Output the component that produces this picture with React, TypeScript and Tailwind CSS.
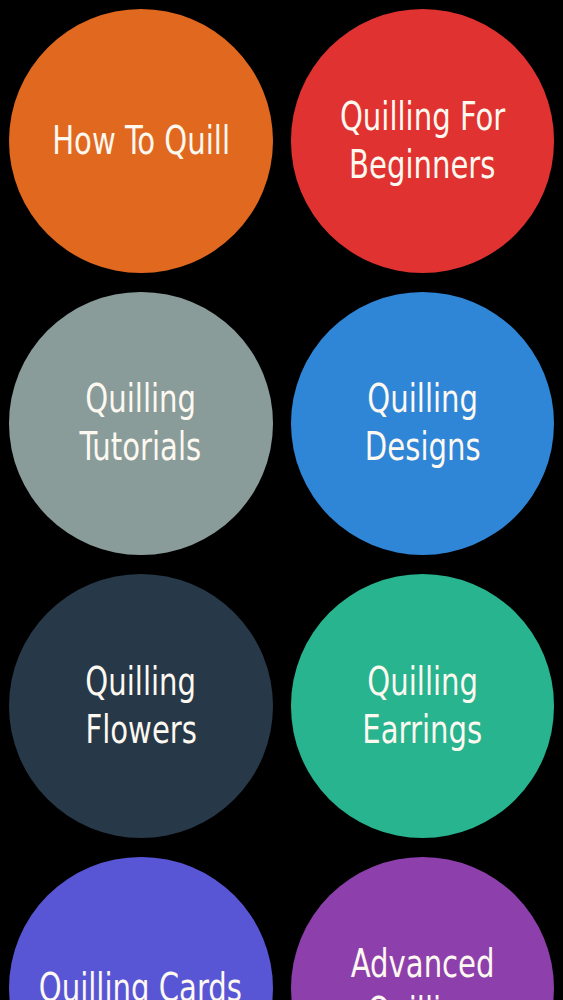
const topics = [
  { label: ['How To Quill'], color: 'bg-[#e0691f]' },
  { label: ['Quilling For', 'Beginners'], color: 'bg-[#e03331]' },
  { label: ['Quilling', 'Tutorials'], color: 'bg-[#899c9a]' },
  { label: ['Quilling', 'Designs'], color: 'bg-[#2f86d7]' },
  { label: ['Quilling', 'Flowers'], color: 'bg-[#273849]' },
  { label: ['Quilling', 'Earrings'], color: 'bg-[#27b48e]' },
  { label: ['Quilling Cards'], color: 'bg-[#5956d6]' },
  { label: ['Advanced', 'Quilling'], color: 'bg-[#8d3fab]' },
]

function TopicCircle({ label, color }: { label: string[]; color: string }) {
  return (
    <button
      className={`${color} aspect-square w-full rounded-full flex flex-col items-center justify-center text-[#fdf8f0]`}
    >
      {label.map((line) => (
        <span
          key={line}
          className="block scale-x-[0.83] text-[39px] leading-[48px] whitespace-nowrap"
        >
          {line}
        </span>
      ))}
    </button>
  )
}

export default function App() {
  return (
    <div
      className="min-h-screen bg-black px-[9px] pt-[9px] pb-[19px] overflow-hidden"
      style={{ fontFamily: '"DejaVu Sans Condensed", "DejaVu Sans", sans-serif' }}
    >
      <div className="grid grid-cols-2 gap-x-[18px] gap-y-[19px]">
        {topics.map((t) => (
          <TopicCircle key={t.label.join(' ')} label={t.label} color={t.color} />
        ))}
      </div>
    </div>
  )
}
